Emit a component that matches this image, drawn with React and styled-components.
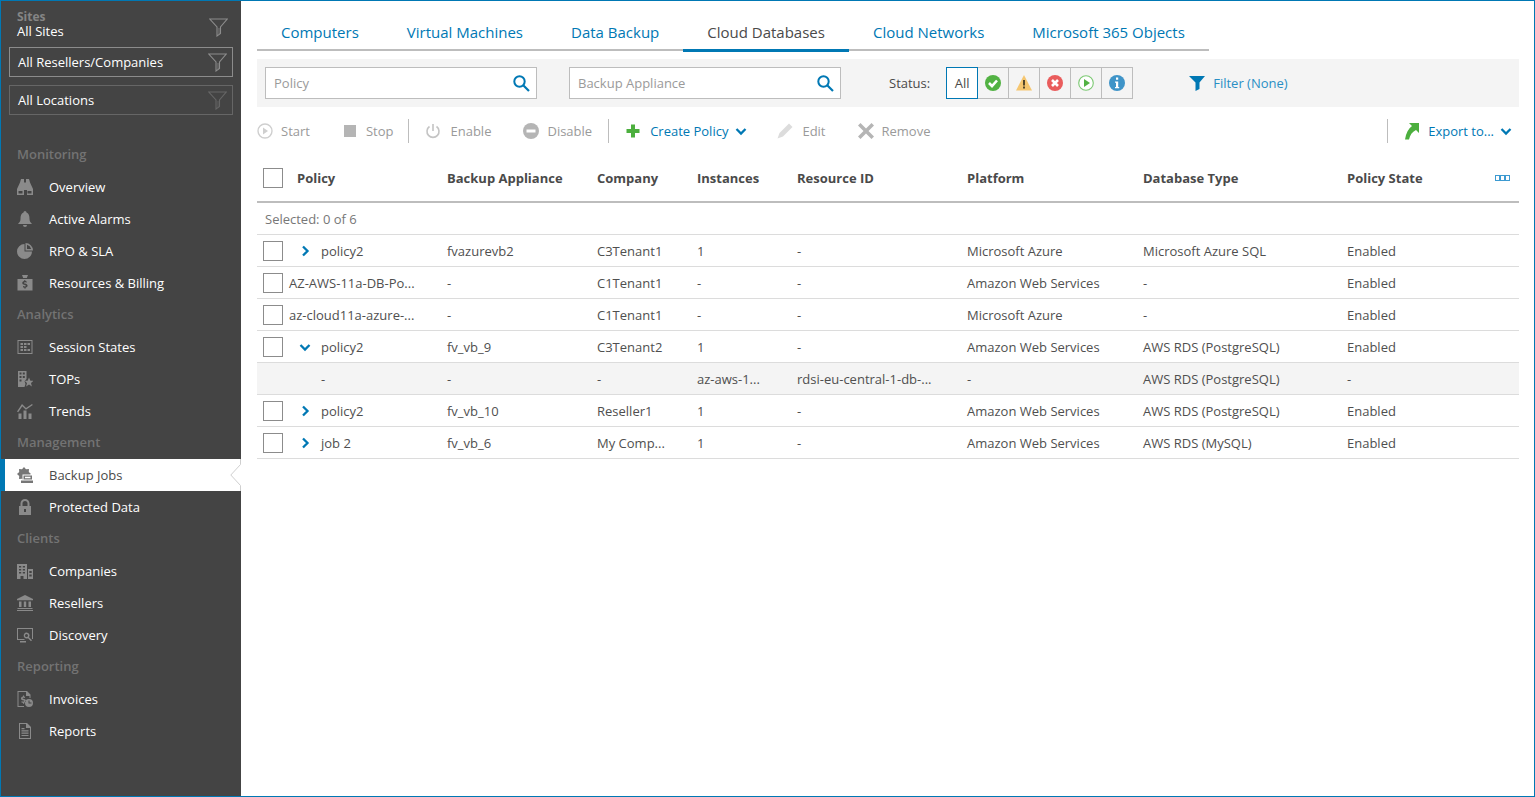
import React from "react";
import styled, { createGlobalStyle } from "styled-components";

const Global = createGlobalStyle`
  html, body { margin: 0; padding: 0; height: 100%; }
  body { font-family: "Open Sans", "Noto Sans", sans-serif; font-size: 13px; color: #4a4a4a; background: #fff; }
  * { box-sizing: border-box; }
`;

const Frame = styled.div`
  width: 1535px;
  height: 797px;
  border: 1px solid #0078b4;
  display: flex;
  overflow: hidden;
`;

const Side = styled.aside`
  width: 240px;
  flex: none;
  background: #444;
  display: flex;
  flex-direction: column;
`;

const SiteBox = styled.div`
  height: 46px;
  padding: 9px 13px 0 16px;
  display: flex;
  justify-content: space-between;
`;

const SiteText = styled.div`
  display: flex;
  flex-direction: column;
  line-height: 14px;
`;

const SiteLabel = styled.span`
  color: #858585;
  font-weight: 700;
  font-size: 12px;
`;

const SiteValue = styled.span`
  color: #fff;
`;

const SiteFunnel = styled.div`
  margin-top: 8px;
`;

const Picker = styled.div`
  height: 30px;
  margin: 0 8px 8px 8px;
  padding: 0 5px 0 8px;
  border: 1px solid ${(p) => (p.$dim ? "#666" : "#8c8c8c")};
  color: #fff;
  display: flex;
  align-items: center;
  justify-content: space-between;
`;

const SideGap = styled.div`
  height: 16px;
`;

const GroupTitle = styled.div`
  height: 32px;
  padding: 0 0 2px 16px;
  display: flex;
  align-items: center;
  color: #737373;
  font-weight: 600;
`;

const NavItem = styled.div`
  position: relative;
  height: 32px;
  display: flex;
  align-items: center;
  padding-left: ${(p) => (p.$active ? "12px" : "16px")};
  gap: 16px;
  color: ${(p) => (p.$active ? "#4a4a4a" : "#fff")};
  background: ${(p) => (p.$active ? "#fff" : "transparent")};
  border-left: ${(p) => (p.$active ? "4px solid #0078b4" : "none")};
`;

const Notch = styled.svg`
  position: absolute;
  right: 0;
  top: 0;
`;

const NavIcon = styled.svg`
  width: 16px;
  height: 16px;
  flex: none;
  fill: ${(p) => (p.$active ? "#777" : "#8a8a8a")};
`;

const Main = styled.main`
  flex: 1;
  padding: 15px 15px 0 16px;
  min-width: 0;
`;

const Tabs = styled.div`
  display: flex;
  width: 952px;
  height: 35px;
  border-bottom: 2px solid #bdbdbd;
`;

const Tab = styled.div`
  height: 36px;
  padding: 0 24px 1px;
  display: flex;
  align-items: center;
  font-size: 15px;
  color: ${(p) => (p.$active ? "#4a4a4a" : "#0078b4")};
  border-bottom: 3px solid ${(p) => (p.$active ? "#0078b4" : "transparent")};
`;

const FilterBar = styled.div`
  margin-top: 8px;
  height: 48px;
  background: #f4f4f4;
  display: flex;
  align-items: center;
  padding-left: 8px;
`;

const Search = styled.div`
  width: 272px;
  height: 32px;
  margin-right: ${(p) => p.$mr || 0}px;
  background: #fff;
  border: 1px solid #bdbdbd;
  padding: 0 6px 0 8px;
  display: flex;
  align-items: center;
  justify-content: space-between;
  color: #9a9a9a;
`;

const StatusLabel = styled.span`
  margin: 0 16px 0 48px;
`;

const StatusGroup = styled.div`
  display: flex;
  height: 32px;
`;

const StatusBtn = styled.div`
  width: 32px;
  margin-left: ${(p) => (p.$first ? "0" : "-1px")};
  height: 32px;
  border: 1px solid ${(p) => (p.$active ? "#0078b4" : "#bdbdbd")};
  background: ${(p) => (p.$active ? "#fff" : "transparent")};
  position: relative;
  z-index: ${(p) => (p.$active ? 1 : 0)};
  display: flex;
  align-items: center;
  justify-content: center;
`;

const FilterLink = styled.div`
  margin-left: 56px;
  display: flex;
  align-items: center;
  gap: 8px;
  color: #2a8fc4;
`;

const Toolbar = styled.div`
  height: 48px;
  display: flex;
  align-items: center;
`;

const Action = styled.div`
  display: flex;
  align-items: center;
  gap: ${(p) => p.$gap || 8}px;
  margin-right: ${(p) => p.$mr || 0}px;
  color: ${(p) => (p.$on ? "#0078b4" : "#9a9a9a")};
`;

const Sep = styled.div`
  width: 1px;
  height: 24px;
  background: #bdbdbd;
  margin: 0 16px 0 ${(p) => p.$l || 16}px;
`;

const Spacer = styled.div`
  flex: 1;
`;

const Row = styled.div`
  display: grid;
  grid-template-columns: 190px 150px 100px 100px 170px 176px 204px 1fr;
  height: ${(p) => p.$h || 32}px;
  align-items: center;
  border-bottom: ${(p) => p.$bw || 1}px solid ${(p) => (p.$bw ? "#bdbdbd" : "#dcdcdc")};
  background: ${(p) => (p.$sub ? "#f4f4f4" : "transparent")};
`;

const Head = styled.div`
  font-weight: 700;
  color: #4a4a4a;
`;

const PolicyHead = styled(Head)`
  margin-left: 14px;
`;

const Cell = styled.div`
  white-space: nowrap;
  color: #4f4f4f;
`;

const FirstCell = styled.div`
  display: flex;
  align-items: center;
  padding-left: 6px;
  color: #4f4f4f;
  white-space: nowrap;
`;

const Check = styled.span`
  width: 20px;
  height: 20px;
  flex: none;
  border: 1px solid #8c8c8c;
  background: #fff;
`;

const CheckSlot = styled.span`
  width: 20px;
  flex: none;
`;

const Expander = styled.span`
  width: ${(p) => p.$w}px;
  flex: none;
  padding-left: ${(p) => (p.$w === 38 ? 6 : 0)}px;
  display: flex;
  justify-content: center;
`;

const Selected = styled.div`
  height: 32px;
  padding-left: 8px;
  display: flex;
  align-items: center;
  border-bottom: 1px solid #dcdcdc;
  color: #777;
`;

const HeadRight = styled.div`
  display: flex;
  align-items: center;
  justify-content: space-between;
  padding-right: 8px;
`;

const Caret = styled.svg`
  margin-left: -2px;
`;

function Funnel({ dim }) {
  return (
    <svg width="19" height="19" viewBox="0 0 19 19" fill="none" stroke={dim ? "#666" : "#8c8c8c"} strokeWidth="1.1">
      <path d="M.8 1h17.400l-6.700 8v6.500L8 18V9z" />
      <path d="M10 10v6" strokeWidth=".8" />
    </svg>
  );
}

function Magnifier() {
  return (
    <svg width="17" height="17" viewBox="0 0 17 17" fill="none" stroke="#0078b4" strokeWidth="2">
      <circle cx="6.500" cy="6.500" r="5.200" />
      <path d="M10.500 10.500l5.500 5.500" strokeWidth="2.200" />
    </svg>
  );
}

function DownCaret() {
  return (
    <Caret width="12" height="12" viewBox="0 0 12 12" fill="none" stroke="#0078b4" strokeWidth="2.300">
      <path d="M1.500 4l4.500 4.500L10.500 4" />
    </Caret>
  );
}

function RowChevron({ down }) {
  return (
    <svg width="12" height="12" viewBox="0 0 12 12" fill="none" stroke="#0078b4" strokeWidth="2.300">
      {down ? <path d="M1.500 4l4.500 4.500L10.500 4" /> : <path d="M4 1.500L8.500 6 4 10.500" />}
    </svg>
  );
}

const p = (d) => <path fillRule="evenodd" d={d} />;

const icons = {
  overview: p("M4 0h3v3.500h2V0h3l1 3.500 3 6.500v6h-6v-5H7v5H0v-6l3-6.500zM1.500 12v2.500h4V12zM10.500 12v2.500h4V12z"),
  alarm: p("M8 0a1.500 1.500 0 0 1 1.500 1.500C12 2.500 12.500 5 12.500 8c0 2 1 3.500 2.500 5H1c1.500-1.500 2.500-3 2.500-5 0-3 .5-5.500 3-6.500A1.500 1.500 0 0 1 8 0zM6 14h4a2 2 0 0 1-4 0z"),
  rpo: (
    <>
      <path d="M7.500 1v7.500H15A7.500 7.500 0 1 1 7.500 1z" />
      <path fillRule="evenodd" d="M8.500 0A7.500 7.500 0 0 1 16 7.500H8.500zM10 1.800V6h4.200A6 6 0 0 0 10 1.800z" />
    </>
  ),
  billing: p("M5 0h6L9.800 3H6.200zM.5 4h15v11.500H.5zM7.300 5v1.100C6 6.400 5.300 7.100 5.300 8.100c0 2.200 3.600 1.700 3.600 2.700 0 .8-1.500.7-2.900.2v1.300c.4.200.9.300 1.300.3v1h1.400v-1.100c1.300-.3 1.900-1 1.900-2 0-2.200-3.600-1.700-3.600-2.600 0-.7 1.200-.7 2.600-.2V6.400c-.4-.2-.8-.3-1.300-.3V5z"),
  session: p("M.5 1h15v14H.5zM1.500 2v12h13V2zM3.500 4h2.500v2H3.500zM7 4h2.500v2H7zM10.500 4H13v2h-2.500zM3.500 7h2.500v2H3.500zM7 7h2.500v2H7zM3.500 10h2.500v2H3.500zM7 10h2.500v2H7zM10.500 10H13v2h-2.500z"),
  tops: p("M1 0h8.500v8L7.500 10l1 3-1 3H1zM2.500 1.500v2h2v-2zM5.800 1.500v2h2v-2zM2.500 5v2h2V5zM5.800 5v2h2V5zM2.500 8.500v2h2v-2zM12 6.500l1.400 3.200H16.500l-2.500 2.200.9 3.600L12 13.600l-2.900 1.900.9-3.600-2.500-2.200h3.100z"),
  trends: p("M1.500 10.500h3V16h-3zM6.500 7.500h3V16h-3zM11.500 10.500h3V16h-3zM0 8.500L5 1l4 4 6-4 .8 1-6.900 4.800-3.600-3.600L1.200 9.300z"),
  jobs: (
    <>
      <path d="M14 7L11.800 9L11.950 11.950L9 11.800L7 14L5 11.800L2.050 11.950L2.200 9L0 7L2.200 5L2.050 2.050L5 2.200L7 0L9 2.200L11.950 2.050L11.800 5z" />
      <rect x="5.500" y="7.500" width="10.500" height="8.500" fill="#fff" />
      <path fillRule="evenodd" d="M6.500 8.500h8.500v4H6.500zM8 9.800v1.500h5.500V9.800zM4 13.500h12V16H4z" />
    </>
  ),
  lock: p("M8 0a4.500 4.500 0 0 1 4.500 4.500V7H14v9H2V7h1.500V4.500A4.500 4.500 0 0 1 8 0zM8 2a2.500 2.500 0 0 0-2.500 2.500V7h5V4.500A2.500 2.500 0 0 0 8 2zM7 10v3h2v-3z"),
  companies: p("M0 1h10v15H6.500v-3h-3v3H0zM2 3v1.500h2.200V3zM5.800 3v1.500H8V3zM2 6v1.500h2.200V6zM5.800 6v1.500H8V6zM2 9v1.500h2.200V9zM5.800 9v1.500H8V9zM11 6h5v10h-5zM12.300 8v2h2.400V8zM12.300 11.500v2h2.400v-2z"),
  resellers: p("M8 0l8 4v1.200H0V4zM2 6.500h2.500V12H2zM6.800 6.500h2.400V12H6.800zM11.500 6.500H14V12h-2.500zM.5 13h15v1H.5zM0 15h16v1H0z"),
  discovery: p("M0 1h16v11h-1V2H1v10h6.500v1H0zM9.500 5.500a3 3 0 0 1 2.500 4.700l3 3-1 1-3-3a3 3 0 1 1-1.500-5.700zM9.500 7a1.500 1.500 0 1 0 0 3 1.500 1.500 0 0 0 0-3zM3 14h6v1.500H3z"),
  invoices: p("M.5 0H10l3.500 3.500V7h-1V5H9V1H1.500v14H7v1H.5zM6 4.500v1C4.700 5.800 4 6.500 4 7.500c0 2.100 3.200 1.600 3.200 2.600 0 .7-1.300.6-2.700.2v1.200c.4.200.9.300 1.500.3v1h1.200v-1.100c1.100-.3 1.700-1 1.700-1.900 0-2.100-3.200-1.700-3.200-2.500 0-.6 1-.6 2.300-.2V5.800l-1-.3v-1zM12 8a4 4 0 1 1 0 8 4 4 0 0 1 0-8zM11.500 9.500v3h3v-1h-2v-2z"),
  reports: p("M2 0h8l4 4v12H2zM3 1v14h10V5H9V1zM4.500 5h3v1.200h-3zM4.500 7.300h7v1.200h-7zM4.500 9.600h7v1.200h-7zM4.500 11.900h7v1.200h-7z"),
};

const navGroups = [
  { title: "Monitoring", items: [["Overview", "overview"], ["Active Alarms", "alarm"], ["RPO & SLA", "rpo"], ["Resources & Billing", "billing"]] },
  { title: "Analytics", items: [["Session States", "session"], ["TOPs", "tops"], ["Trends", "trends"]] },
  { title: "Management", items: [["Backup Jobs", "jobs", true], ["Protected Data", "lock"]] },
  { title: "Clients", items: [["Companies", "companies"], ["Resellers", "resellers"], ["Discovery", "discovery"]] },
  { title: "Reporting", items: [["Invoices", "invoices"], ["Reports", "reports"]] },
];

const rows = [
  { policy: "policy2", exp: "right", cells: ["fvazurevb2", "C3Tenant1", "1", "-", "Microsoft Azure", "Microsoft Azure SQL", "Enabled"] },
  { policy: "AZ-AWS-11a-DB-Po...", cells: ["-", "C1Tenant1", "-", "-", "Amazon Web Services", "-", "Enabled"] },
  { policy: "az-cloud11a-azure-...", cells: ["-", "C1Tenant1", "-", "-", "Microsoft Azure", "-", "Enabled"] },
  { policy: "policy2", exp: "down", cells: ["fv_vb_9", "C3Tenant2", "1", "-", "Amazon Web Services", "AWS RDS (PostgreSQL)", "Enabled"] },
  { policy: "-", sub: true, cells: ["-", "-", "az-aws-1...", "rdsi-eu-central-1-db-...", "-", "AWS RDS (PostgreSQL)", "-"] },
  { policy: "policy2", exp: "right", cells: ["fv_vb_10", "Reseller1", "1", "-", "Amazon Web Services", "AWS RDS (PostgreSQL)", "Enabled"] },
  { policy: "job 2", exp: "right", cells: ["fv_vb_6", "My Comp...", "1", "-", "Amazon Web Services", "AWS RDS (MySQL)", "Enabled"] },
];

const columns = ["Backup Appliance", "Company", "Instances", "Resource ID", "Platform", "Database Type"];

const tabs = ["Computers", "Virtual Machines", "Data Backup", "Cloud Databases", "Cloud Networks", "Microsoft 365 Objects"];

function StatusIcon({ bg, children }) {
  return (
    <svg width="18" height="18" viewBox="0 0 18 18">
      <circle cx="9" cy="9" r="8" fill={bg} />
      {children}
    </svg>
  );
}

export default function App() {
  return (
    <>
      <Global />
      <Frame>
        <Side>
          <SiteBox>
            <SiteText>
              <SiteLabel>Sites</SiteLabel>
              <SiteValue>All Sites</SiteValue>
            </SiteText>
            <SiteFunnel><Funnel /></SiteFunnel>
          </SiteBox>
          <Picker>
            All Resellers/Companies
            <Funnel />
          </Picker>
          <Picker $dim>
            All Locations
            <Funnel dim />
          </Picker>
          <SideGap />
          {navGroups.map((g) => (
            <React.Fragment key={g.title}>
              <GroupTitle>{g.title}</GroupTitle>
              {g.items.map(([label, icon, active]) => (
                <NavItem key={label} $active={active}>
                  <NavIcon viewBox="0 0 16 16" $active={active}>{icons[icon]}</NavIcon>
                  {label}
                  {active && (
                    <Notch width="11" height="32" viewBox="0 0 11 32" fill="none" stroke="#cfcfcf">
                      <path d="M10.500 0v5.500L.8 16l9.700 10.500V32" />
                    </Notch>
                  )}
                </NavItem>
              ))}
            </React.Fragment>
          ))}
        </Side>
        <Main>
          <Tabs>
            {tabs.map((t) => (
              <Tab key={t} $active={t === "Cloud Databases"}>{t}</Tab>
            ))}
          </Tabs>
          <FilterBar>
            <Search $mr={32}>Policy<Magnifier /></Search>
            <Search>Backup Appliance<Magnifier /></Search>
            <StatusLabel>Status:</StatusLabel>
            <StatusGroup>
              <StatusBtn $active $first>All</StatusBtn>
              <StatusBtn>
                <StatusIcon bg="#52b243"><path d="M5 9l3 3 5-5.500" fill="none" stroke="#fff" strokeWidth="2.600" /></StatusIcon>
              </StatusBtn>
              <StatusBtn>
                <svg width="18" height="18" viewBox="0 0 18 18">
                  <path d="M9 1l8 15.500H1z" fill="#f5c670" />
                  <path d="M8 6h2v5.500H8zM8 12.500h2v2H8z" fill="#54462a" />
                </svg>
              </StatusBtn>
              <StatusBtn>
                <StatusIcon bg="#e95c5c"><path d="M6 6l6 6M12 6l-6 6" stroke="#fff" strokeWidth="2.600" /></StatusIcon>
              </StatusBtn>
              <StatusBtn>
                <svg width="18" height="18" viewBox="0 0 18 18">
                  <circle cx="9" cy="9" r="7.300" fill="#fff" stroke="#7cc973" strokeWidth="1.100" />
                  <path d="M7 5l6 4-6 4z" fill="#52b243" />
                </svg>
              </StatusBtn>
              <StatusBtn>
                <StatusIcon bg="#3f94c8"><path d="M8 3.500h2.200v2.200H8zM7 7.500h3.200V13H11.200v1.200H7V13h1V8.700H7z" fill="#fff" /></StatusIcon>
              </StatusBtn>
            </StatusGroup>
            <FilterLink>
              <svg width="16" height="16" viewBox="0 0 16 16">
                <path d="M0 1h16l-5.500 6.500V14l-4 2V7.500z" fill="#0078b4" />
              </svg>
              Filter (None)
            </FilterLink>
          </FilterBar>
          <Toolbar>
            <Action $mr={34}>
              <svg width="16" height="16" viewBox="0 0 16 16">
                <circle cx="8" cy="8" r="7" fill="none" stroke="#cfcfcf" strokeWidth="1.400" />
                <path d="M6 4.500l5 3.500-5 3.500z" fill="#cfcfcf" />
              </svg>
              Start
            </Action>
            <Action $gap={10}>
              <svg width="12" height="12" viewBox="0 0 12 12"><rect width="12" height="12" fill="#b5b5b5" /></svg>
              Stop
            </Action>
            <Sep $l={15} />
            <Action $mr={32} $gap={9}>
              <svg width="16" height="16" viewBox="0 0 16 16" fill="none" stroke="#c4c4c4" strokeWidth="1.600">
                <path d="M4.500 3.500a6 6 0 1 0 7 0M8 1v7" />
              </svg>
              Enable
            </Action>
            <Action $gap={8}>
              <svg width="16" height="16" viewBox="0 0 16 16">
                <circle cx="8" cy="8" r="8" fill="#b5b5b5" />
                <rect x="3.500" y="6.500" width="9" height="3" fill="#fff" />
              </svg>
              Disable
            </Action>
            <Sep />
            <Action $on $mr={29} $gap={9}>
              <svg width="16" height="16" viewBox="0 0 16 16"><path d="M6 1.500h4v4.500h4.500v4H10v4.500H6V10H1.500V6H6z" fill="#4caf3e" /></svg>
              Create Policy
              <DownCaret />
            </Action>
            <Action $mr={32}>
              <svg width="18" height="18" viewBox="0 0 18 18">
                <path d="M13 1.500l3.500 3.500-9.500 9.500-5.500 2 2-5.500z" fill="#dcdcdc" />
              </svg>
              Edit
            </Action>
            <Action>
              <svg width="16" height="16" viewBox="0 0 16 16">
                <path d="M0 2.500L2.500 0 8 5.500 13.500 0 16 2.500 10.500 8l5.500 5.500-2.500 2.500L8 10.500 2.500 16 0 13.500 5.500 8z" fill="#b5b5b5" />
              </svg>
              Remove
            </Action>
            <Spacer />
            <Sep />
            <Action $on $mr={7} $gap={8}>
              <svg width="16" height="18" viewBox="0 0 16 18">
                <path d="M5 1h10v10l-3-3C8 10 6 13 5 17.500H1C2 11 4.500 6.500 8 4z" fill="#4caf3e" />
              </svg>
              Export to...
              <DownCaret />
            </Action>
          </Toolbar>
          <Row $h={48} $bw={2}>
            <FirstCell>
              <Check />
              <PolicyHead>Policy</PolicyHead>
            </FirstCell>
            {columns.map((c) => <Head key={c}>{c}</Head>)}
            <HeadRight>
              <Head>Policy State</Head>
              <svg width="16" height="6" viewBox="0 0 16 6" fill="none" stroke="#3d9ad1">
                <rect x=".5" y=".5" width="4" height="5" />
                <rect x="5.500" y=".5" width="4" height="5" />
                <rect x="10.500" y=".5" width="4" height="5" />
              </svg>
            </HeadRight>
          </Row>
          <Selected>Selected: 0 of 6</Selected>
          {rows.map((r, i) => (
            <Row key={i} $sub={r.sub}>
              <FirstCell>
                {r.sub ? <CheckSlot /> : <Check />}
                <Expander $w={r.exp || r.sub ? 38 : 6}>
                  {r.exp && <RowChevron down={r.exp === "down"} />}
                </Expander>
                {r.policy}
              </FirstCell>
              {r.cells.map((c, j) => <Cell key={j}>{c}</Cell>)}
            </Row>
          ))}
        </Main>
      </Frame>
    </>
  );
}
